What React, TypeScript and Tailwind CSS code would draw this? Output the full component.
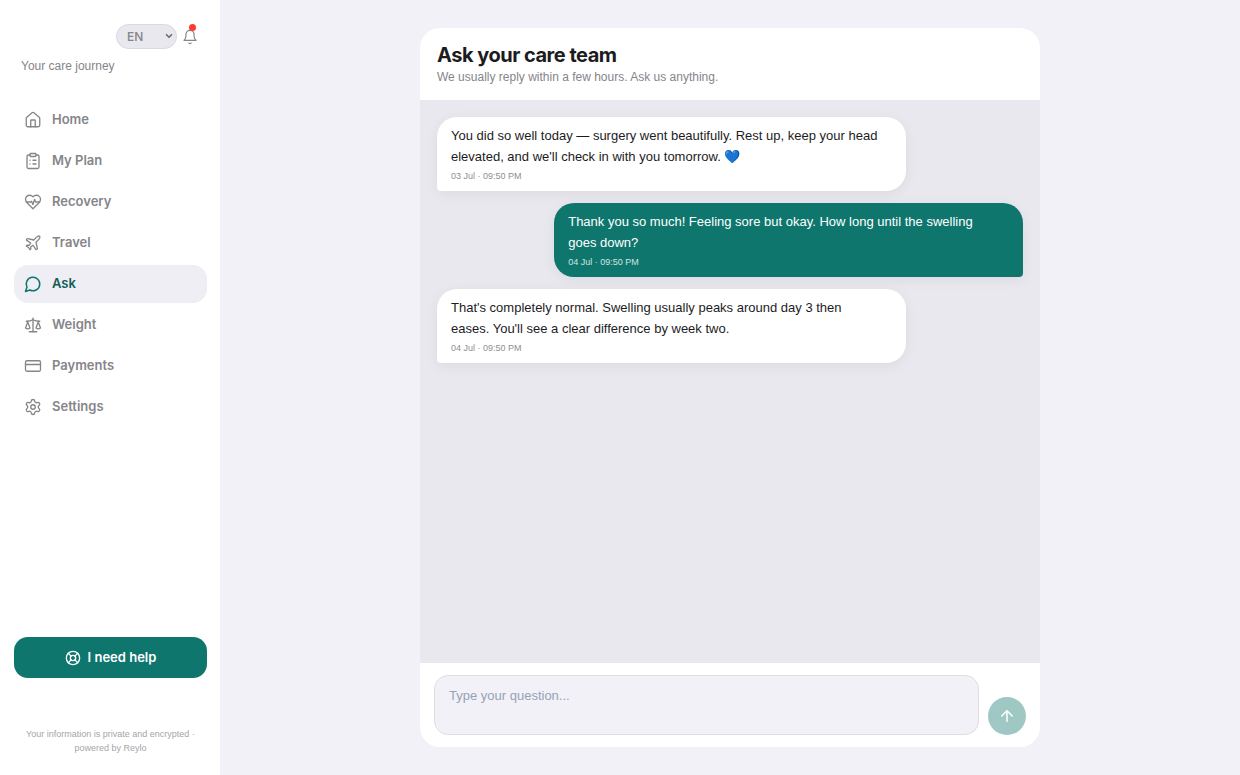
import {
  ArrowUp,
  ChevronDown,
  ClipboardList,
  CreditCard,
  House,
  LifeBuoy,
  Plane,
  Scale,
  Settings,
} from "lucide-react";
import clsx from "clsx";

interface IconProps {
  className?: string;
  strokeWidth?: number;
}

const strokeProps = {
  viewBox: "0 0 24 24",
  fill: "none",
  stroke: "currentColor",
  strokeLinecap: "round",
  strokeLinejoin: "round",
} as const;

const Heart = (props: IconProps) => (
  <svg {...strokeProps} {...props}>
    <path d="M19 14c1.490-1.460 3-3.210 3-5.500A5.500 5.500 0 0 0 16.500 3c-1.760 0-3 .5-4.500 2-1.500-1.500-2.740-2-4.500-2A5.500 5.500 0 0 0 2 8.500c0 2.300 1.500 4.050 3 5.500l7 7Z" />
    <path d="M3.220 12H9.500l.5-1 2 4.500 2-7 1.500 3.500h5.270" />
  </svg>
);

const Chatting = (props: IconProps) => (
  <svg {...strokeProps} {...props}>
    <path d="M7.900 20A9 9 0 1 0 4 16.100L2 22Z" />
  </svg>
);

const Bell = (props: IconProps) => (
  <svg {...strokeProps} {...props}>
    <path d="M6 8a6 6 0 0 1 12 0c0 7 3 9 3 9H3s3-2 3-9" />
    <path d="M10.300 21a1.940 1.940 0 0 0 3.400 0" />
  </svg>
);

interface NavItem {
  label: string;
  icon: React.ComponentType<IconProps>;
  active?: boolean;
}

const navItems: NavItem[] = [
  { label: "Home", icon: House },
  { label: "My Plan", icon: ClipboardList },
  { label: "Recovery", icon: Heart },
  { label: "Travel", icon: Plane },
  { label: "Ask", icon: Chatting, active: true },
  { label: "Weight", icon: Scale },
  { label: "Payments", icon: CreditCard },
  { label: "Settings", icon: Settings },
];

interface Message {
  id: number;
  text: string;
  time: string;
  mine?: boolean;
}

const messages: Message[] = [
  {
    id: 1,
    text: "You did so well today — surgery went beautifully. Rest up, keep your head elevated, and we'll check in with you tomorrow. 💙",
    time: "03 Jul · 09:50 PM",
  },
  {
    id: 2,
    text: "Thank you so much! Feeling sore but okay. How long until the swelling goes down?",
    time: "04 Jul · 09:50 PM",
    mine: true,
  },
  {
    id: 3,
    text: "That's completely normal. Swelling usually peaks around day 3 then eases. You'll see a clear difference by week two.",
    time: "04 Jul · 09:50 PM",
  },
];

export default function App() {
  return (
    <div className="flex h-screen bg-[#f2f1f7] font-['Liberation_Sans','Noto_Color_Emoji',sans-serif] text-[#1c1c1e]">
      <Sidebar />
      <main className="flex flex-1 justify-center py-7">
        <Chat />
      </main>
    </div>
  );
}

function Sidebar() {
  return (
    <aside className="flex w-[220px] shrink-0 flex-col bg-white pt-5 pr-[13px] pb-5 pl-3.5">
      <div className="flex items-center justify-end gap-[5px] pt-1 pr-[9px]">
        <div className="relative">
          <select
            aria-label="Language"
            defaultValue="EN"
            className="block h-[25px] w-[61px] appearance-none rounded-full border border-[#d9d9de] bg-[#e9e8ee] pl-2.5 font-[Inter,sans-serif] text-xs font-medium text-[#85858a]"
          >
            <option>EN</option>
            <option>ES</option>
          </select>
          <ChevronDown
            className="pointer-events-none absolute top-[7px] right-[3px] size-2.5 text-[#6b6b70]"
            strokeWidth={4}
          />
        </div>
        <button aria-label="Notifications" className="relative text-[#85858a]">
          <Bell className="size-4" strokeWidth={1.75} />
          <span className="absolute -top-[5px] right-0.5 size-[7px] rounded-full bg-[#ff3b30]" />
        </button>
      </div>
      <p className="mt-2 px-[7px] text-xs leading-[18px] text-[#85858a]">Your care journey</p>

      <nav className="mt-[26px] flex flex-col gap-[3px]">
        {navItems.map(({ label, icon: Icon, active }) => (
          <a
            key={label}
            href="#"
            className={clsx(
              "flex h-[38px] items-center gap-2.5 rounded-[14px] px-2.5 font-[Inter,sans-serif] text-[13px] font-semibold",
              active ? "bg-[#efeef4] text-[#115e59]" : "text-[#85858a]"
            )}
          >
            <Icon
              className={clsx("size-[18px]", active && "text-[#0f766e]")}
              strokeWidth={active ? 2 : 1.75}
            />
            {label}
          </a>
        ))}
      </nav>

      <button className="mt-auto flex h-[41px] items-center justify-center gap-[7px] rounded-[14px] bg-[#0f766e] font-[Inter,sans-serif] text-[13px] font-semibold text-white">
        <LifeBuoy className="size-4" />
        I need help
      </button>
      <p className="mt-[49px] px-2 text-center text-[9px] leading-[14px] text-[#a5a5a9]">
        Your information is private and encrypted · powered by Reylo
      </p>
    </aside>
  );
}

function Chat() {
  return (
    <section className="flex w-full max-w-[620px] flex-col overflow-hidden rounded-[20px] bg-white">
      <header className="px-[17px] pt-3.5 pb-[13px]">
        <h1 className="font-[Inter,sans-serif] text-xl leading-[26px] font-bold tracking-tight">
          Ask your care team
        </h1>
        <p className="text-xs leading-[19px] text-[#85858a]">
          We usually reply within a few hours. Ask us anything.
        </p>
      </header>

      <div className="flex flex-1 flex-col gap-3 bg-[#e9e8ee] p-[17px]">
        {messages.map((message) => (
          <Bubble key={message.id} {...message} />
        ))}
      </div>

      <form className="flex items-end gap-[9px] px-3.5 py-3">
        <textarea
          aria-label="Your question"
          placeholder="Type your question..."
          className="block h-[60px] flex-1 resize-none rounded-[14px] border border-[#dddde2] bg-[#f2f1f7] px-3.5 py-2.5 text-[13px] leading-5 placeholder:text-[#94a3b8]"
        />
        <button
          type="button"
          aria-label="Send"
          className="flex size-[38px] items-center justify-center rounded-full bg-[#9fc8c5] text-white"
        >
          <ArrowUp className="size-[18px]" />
        </button>
      </form>
    </section>
  );
}

function Bubble({ text, time, mine }: Message) {
  return (
    <div
      className={clsx(
        "w-4/5 rounded-[20px] pt-2 pr-[26px] pb-[7px] pl-3.5 shadow-[0_3px_14px_rgba(0,0,0,0.06)]",
        mine ? "self-end rounded-br-[4px] bg-[#0f766e] text-white" : "rounded-bl-[4px] bg-white"
      )}
    >
      <p className="text-[13px] leading-[21px]">{text}</p>
      <time
        className={clsx("mt-px block text-[9px] leading-4", mine ? "text-[#cfe4e2]" : "text-[#8e8e93]")}
      >
        {time}
      </time>
    </div>
  );
}
